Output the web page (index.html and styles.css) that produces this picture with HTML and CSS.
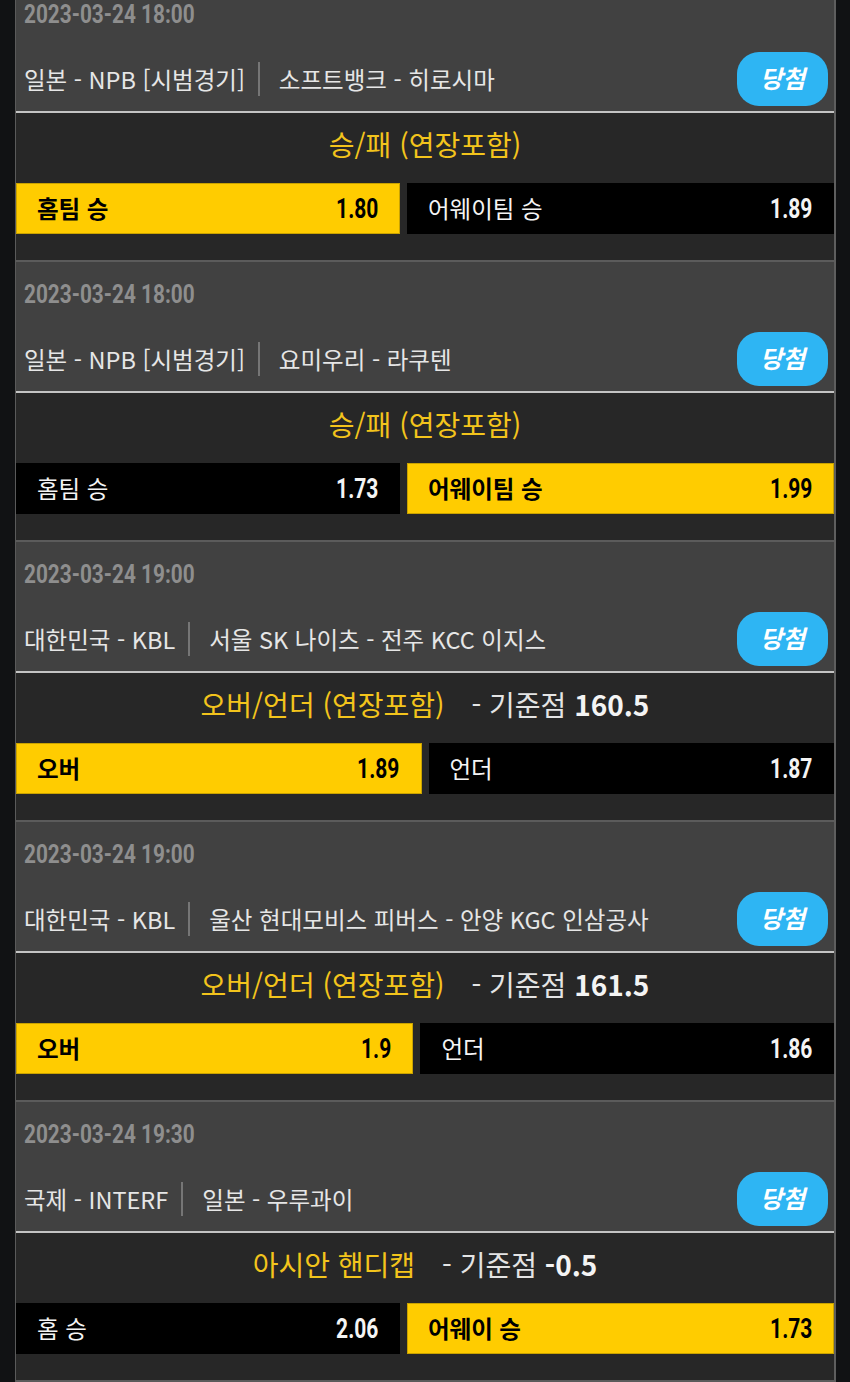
FILE: index.html
```html
<!DOCTYPE html>
<html lang="ko">
<head>
<meta charset="utf-8">
<title>Bet history</title>
<link rel="stylesheet" href="styles.css">
</head>
<body>
<div class="list">

  <div class="card">
    <div class="head">
      <div class="date"><span class="date-txt">2023-03-24 18:00</span></div>
      <div class="league-row">
        <span class="league">일본 - NPB [시범경기]</span>
        <span class="bar"></span>
        <span class="teams">소프트뱅크 - 히로시마</span>
        <span class="badge">당첨</span>
      </div>
    </div>
    <div class="market">
      <div class="title"><span class="mname">승/패 (연장포함)</span></div>
      <div class="odds">
        <div class="opt sel"><span class="lbl">홈팀 승</span><span class="num">1.80</span></div>
        <div class="opt"><span class="lbl">어웨이팀 승</span><span class="num">1.89</span></div>
      </div>
    </div>
  </div>

  <div class="card">
    <div class="head">
      <div class="date"><span class="date-txt">2023-03-24 18:00</span></div>
      <div class="league-row">
        <span class="league">일본 - NPB [시범경기]</span>
        <span class="bar"></span>
        <span class="teams">요미우리 - 라쿠텐</span>
        <span class="badge">당첨</span>
      </div>
    </div>
    <div class="market">
      <div class="title"><span class="mname">승/패 (연장포함)</span></div>
      <div class="odds">
        <div class="opt"><span class="lbl">홈팀 승</span><span class="num">1.73</span></div>
        <div class="opt sel"><span class="lbl">어웨이팀 승</span><span class="num">1.99</span></div>
      </div>
    </div>
  </div>

  <div class="card">
    <div class="head">
      <div class="date"><span class="date-txt">2023-03-24 19:00</span></div>
      <div class="league-row">
        <span class="league">대한민국 - KBL</span>
        <span class="bar"></span>
        <span class="teams">서울 SK 나이츠 - 전주 KCC 이지스</span>
        <span class="badge">당첨</span>
      </div>
    </div>
    <div class="market">
      <div class="title"><span class="mname">오버/언더 (연장포함)</span><span class="extra">- 기준점 <b>160.5</b></span></div>
      <div class="odds">
        <div class="opt sel"><span class="lbl">오버</span><span class="num">1.89</span></div>
        <div class="opt"><span class="lbl">언더</span><span class="num">1.87</span></div>
      </div>
    </div>
  </div>

  <div class="card">
    <div class="head">
      <div class="date"><span class="date-txt">2023-03-24 19:00</span></div>
      <div class="league-row">
        <span class="league">대한민국 - KBL</span>
        <span class="bar"></span>
        <span class="teams">울산 현대모비스 피버스 - 안양 KGC 인삼공사</span>
        <span class="badge">당첨</span>
      </div>
    </div>
    <div class="market">
      <div class="title"><span class="mname">오버/언더 (연장포함)</span><span class="extra">- 기준점 <b>161.5</b></span></div>
      <div class="odds">
        <div class="opt sel"><span class="lbl">오버</span><span class="num">1.9</span></div>
        <div class="opt"><span class="lbl">언더</span><span class="num">1.86</span></div>
      </div>
    </div>
  </div>

  <div class="card">
    <div class="head">
      <div class="date"><span class="date-txt">2023-03-24 19:30</span></div>
      <div class="league-row">
        <span class="league">국제 - INTERF</span>
        <span class="bar"></span>
        <span class="teams">일본 - 우루과이</span>
        <span class="badge">당첨</span>
      </div>
    </div>
    <div class="market">
      <div class="title"><span class="mname">아시안 핸디캡</span><span class="extra">- 기준점 <b>-0.5</b></span></div>
      <div class="odds">
        <div class="opt"><span class="lbl">홈 승</span><span class="num">2.06</span></div>
        <div class="opt sel"><span class="lbl">어웨이 승</span><span class="num">1.73</span></div>
      </div>
    </div>
  </div>

</div>
</body>
</html>
```

FILE: styles.css
```css
* { box-sizing: border-box; }

html, body {
  margin: 0;
  padding: 0;
  background: #111214;
  overflow: hidden;
}

body {
  font-family: "Noto Sans CJK KR", "Noto Sans", sans-serif;
  color: #e8e8e8;
}

.list {
  margin-top: -20px;
  margin-left: 15px;
  width: 821px;
  border-left: 1px solid #5a5a5a;
  border-right: 2px solid #5e5e5e;
  border-bottom: 2px solid #5b5b5b;
}

.card {
  border-top: 2px solid #5b5b5b;
}

.head {
  background: #414141;
  border-bottom: 2px solid #c4c4c4;
}

.date {
  height: 64px;
  display: flex;
  align-items: center;
  padding-left: 8px;
}

.date-txt {
  display: inline-block;
  font-family: "Roboto", "DejaVu Sans", sans-serif;
  font-weight: 700;
  font-size: 26px;
  color: #8e8e8e;
  transform: scaleX(0.8);
  transform-origin: left center;
}

.league-row {
  height: 65px;
  display: flex;
  align-items: center;
  padding: 0 6px 0 8px;
  font-size: 23.5px;
  color: #e6e6e6;
}

.bar {
  width: 2px;
  height: 34px;
  background: #767676;
  margin: 0 19px 0 13px;
}

.badge {
  margin-left: auto;
  width: 91px;
  height: 54px;
  border-radius: 22px;
  background: #2eb5f3;
  color: #ffffff;
  font-weight: 700;
  font-style: italic;
  font-size: 24.5px;
  display: flex;
  align-items: center;
  justify-content: center;
  padding-bottom: 2px;
}

.market {
  background: #272727;
  padding-bottom: 26px;
}

.title {
  height: 66px;
  margin-bottom: 4px;
  padding-bottom: 4px;
  display: flex;
  align-items: center;
  justify-content: center;
  gap: 27px;
  font-size: 28px;
}

.mname {
  color: #f3c41c;
}

.extra {
  color: #e4e4e4;
}

.extra b {
  color: #f4f4f4;
  font-weight: 700;
}

.odds {
  display: flex;
  gap: 7px;
  height: 51px;
}

.opt {
  flex: 1 1 auto;
  display: flex;
  align-items: center;
  justify-content: space-between;
  padding: 0 22px 0 21px;
  background: #000000;
  color: #f4f4f4;
}

.opt.sel {
  background: #ffcc00;
  color: #000000;
  box-shadow: inset 0 0 0 1px #c9a200;
}

.lbl {
  font-size: 23.5px;
  padding-bottom: 1px;
}

.opt.sel .lbl {
  font-weight: 700;
}

.num {
  display: inline-block;
  font-family: "Roboto", "DejaVu Sans", sans-serif;
  font-weight: 700;
  font-size: 28px;
  transform: scaleX(0.75);
  transform-origin: right center;
}
```
